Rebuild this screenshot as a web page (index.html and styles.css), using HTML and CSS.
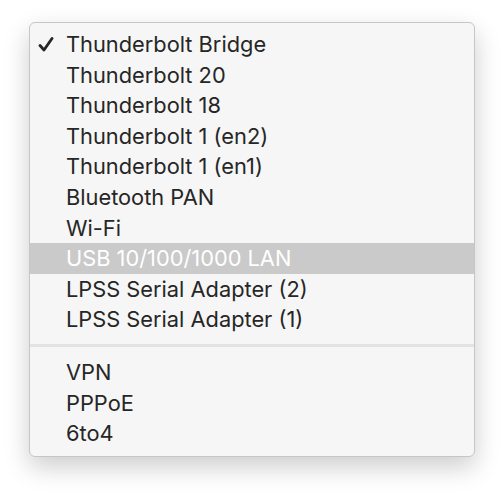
FILE: index.html
```html
<!DOCTYPE html>
<html lang="en">
<head>
    <meta charset="UTF-8">
    <title>Network menu</title>
    <link rel="stylesheet" href="styles.css">
</head>
<body>
    <div class="menu">
        <div class="group">
            <div class="item checked">
                <svg class="check" width="16" height="15" viewBox="0 0 16 15"><path d="M2 8.5 L6 13 L14 1.5" fill="none" stroke="#262626" stroke-width="2.8" stroke-linecap="round" stroke-linejoin="round"/></svg>
                Thunderbolt Bridge
            </div>
            <div class="item">Thunderbolt 20</div>
            <div class="item">Thunderbolt 18</div>
            <div class="item">Thunderbolt 1 (en2)</div>
            <div class="item">Thunderbolt 1 (en1)</div>
            <div class="item">Bluetooth PAN</div>
            <div class="item">Wi-Fi</div>
            <div class="item active">USB 10/100/1000 LAN</div>
            <div class="item">LPSS Serial Adapter (2)</div>
            <div class="item">LPSS Serial Adapter (1)</div>
        </div>
        <div class="separator"></div>
        <div class="group">
            <div class="item">VPN</div>
            <div class="item">PPPoE</div>
            <div class="item">6to4</div>
        </div>
    </div>
</body>
</html>
```

FILE: styles.css
```css
body {
    margin: 0;
    height: 492px;
    background-color: #ffffff;
    font-family: 'Inter', 'Liberation Sans', sans-serif;
}
.menu {
    width: 444px;
    margin: 22px 0 0 29px;
    padding: 6px 0 7px;
    background-color: #f6f6f6;
    border: 1px solid #c6c6c6;
    border-radius: 6px;
    box-shadow: 0 10px 26px rgba(0, 0, 0, 0.2);
    color: #262626;
}
.item {
    position: relative;
    height: 30.6px;
    line-height: 30.6px;
    padding-left: 36px;
    font-size: 21.8px;
}
.item.active {
    background-color: #cacaca;
    color: #ffffff;
}
.check {
    position: absolute;
    left: 8px;
    top: 8px;
}
.separator {
    height: 3px;
    margin: 9px 0 10px;
    background-color: #e3e3e3;
}
```
